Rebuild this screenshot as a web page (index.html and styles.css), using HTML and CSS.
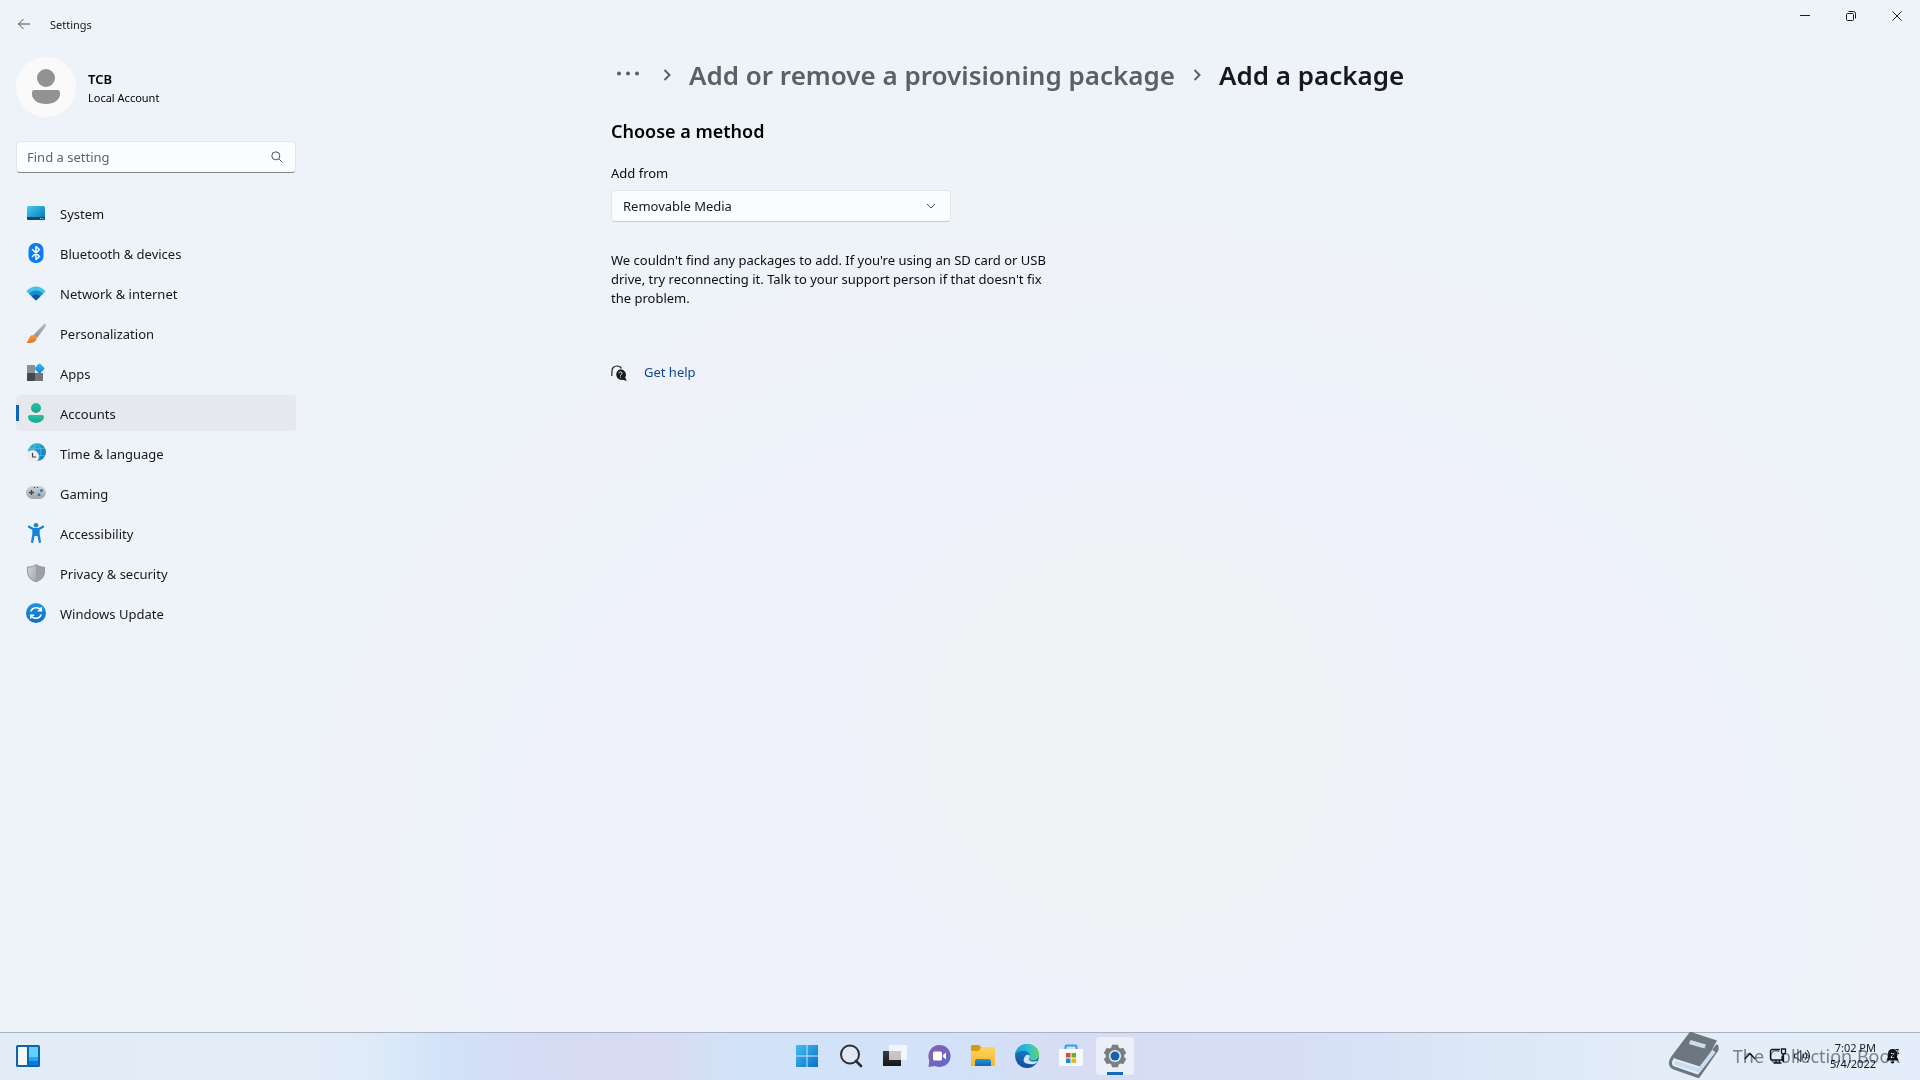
FILE: index.html
```html
<!DOCTYPE html>
<html lang="en">
<head>
<meta charset="utf-8">
<title>Settings</title>
<link rel="stylesheet" href="styles.css">
</head>
<body>
<svg class="defs" aria-hidden="true">
  <defs>
    <linearGradient id="g-sys" x1="0" y1="0" x2="1" y2="1"><stop offset="0" stop-color="#3fd0e8"/><stop offset="1" stop-color="#0a6fb8"/></linearGradient>
    <linearGradient id="g-brush" x1="0" y1="1" x2="1" y2="0"><stop offset="0" stop-color="#8a8d91"/><stop offset="1" stop-color="#b8bbbf"/></linearGradient>
    <linearGradient id="g-tip" x1="0" y1="0" x2="0" y2="1"><stop offset="0" stop-color="#f6a04a"/><stop offset="1" stop-color="#e0741a"/></linearGradient>
    <linearGradient id="g-dia" x1="0" y1="0" x2="1" y2="1"><stop offset="0" stop-color="#3cb6ea"/><stop offset="1" stop-color="#1585cf"/></linearGradient>
    <linearGradient id="g-acc" x1="0" y1="0" x2="0" y2="1"><stop offset="0" stop-color="#2cc2a4"/><stop offset="1" stop-color="#17a58c"/></linearGradient>
    <linearGradient id="g-globe" x1="0" y1="0" x2="1" y2="1"><stop offset="0" stop-color="#2fc0d6"/><stop offset="1" stop-color="#0c6fc6"/></linearGradient>
    <linearGradient id="g-pad" x1="0" y1="0" x2="0" y2="1"><stop offset="0" stop-color="#cfd3d8"/><stop offset="1" stop-color="#a2a6ad"/></linearGradient>
    <linearGradient id="g-shield" x1="0" y1="0" x2="1" y2="1"><stop offset="0" stop-color="#d2d5d8"/><stop offset="1" stop-color="#a4a7ab"/></linearGradient>
    <linearGradient id="g-upd" x1="0" y1="0" x2="0" y2="1"><stop offset="0" stop-color="#1a9ae0"/><stop offset="1" stop-color="#0f6cc4"/></linearGradient>
    <linearGradient id="g-win" x1="0" y1="0" x2="1" y2="1"><stop offset="0" stop-color="#3fc0f0"/><stop offset="1" stop-color="#0a6fc8"/></linearGradient>
    <linearGradient id="g-chat" x1="0" y1="0" x2="1" y2="1"><stop offset="0" stop-color="#8e62a8"/><stop offset="1" stop-color="#5a68d0"/></linearGradient>
    <linearGradient id="g-fold" x1="0" y1="0" x2="0" y2="1"><stop offset="0" stop-color="#fdd55c"/><stop offset="1" stop-color="#f4b82c"/></linearGradient>
    <linearGradient id="g-foldb" x1="0" y1="0" x2="0" y2="1"><stop offset="0" stop-color="#2a94d8"/><stop offset="1" stop-color="#1466b4"/></linearGradient>
    <linearGradient id="g-edge" x1="0" y1="0" x2="1" y2="0"><stop offset="0" stop-color="#1f9fe0"/><stop offset=".55" stop-color="#2fc0d0"/><stop offset="1" stop-color="#62d564"/></linearGradient>
    <linearGradient id="g-edge2" x1="0" y1="0" x2="0" y2="1"><stop offset="0" stop-color="#1a86d6"/><stop offset="1" stop-color="#0e4f9c"/></linearGradient>
    <linearGradient id="g-tv" x1="0" y1="0" x2="0" y2="1"><stop offset="0" stop-color="#3c3c3e"/><stop offset="1" stop-color="#161618"/></linearGradient>
  </defs>
</svg>

<div class="window">
  <header class="titlebar">
    <button class="back" aria-label="Back">
      <svg width="14" height="12" viewBox="0 0 14 12"><path d="M6.500 1 1.500 6l5 5M1.500 6H13" class="line-soft"/></svg>
    </button>
    <span class="app-name">Settings</span>
    <div class="caption">
      <button aria-label="Minimize"><svg width="12" height="12" viewBox="0 0 12 12"><path d="M1 5.500h10" class="line"/></svg></button>
      <button aria-label="Restore"><svg width="12" height="12" viewBox="0 0 12 12"><rect x="1.500" y="3.500" width="7" height="7" rx="1" class="line"/><path d="M3.500 1.500h5a2 2 0 0 1 2 2v5" class="line"/></svg></button>
      <button aria-label="Close"><svg width="12" height="12" viewBox="0 0 12 12"><path d="m1.500 1.500 9 9m0-9-9 9" class="line"/></svg></button>
    </div>
  </header>

  <aside class="sidebar">
    <div class="account">
      <svg class="avatar" width="60" height="60" viewBox="0 0 60 60"><circle cx="30" cy="30" r="30" fill="#fafafa"/><circle cx="30" cy="21" r="9" fill="#929292"/><path d="M18.500 33h23a2.500 2.500 0 0 1 2.500 2.500v1.500c0 6-6 10-14 10s-14-4-14-10v-1.500a2.500 2.500 0 0 1 2.500-2.500z" fill="#929292"/></svg>
      <div class="account-text">
        <strong>TCB</strong>
        <span>Local Account</span>
      </div>
    </div>

    <label class="search">
      <input type="text" placeholder="Find a setting" aria-label="Find a setting">
      <svg width="12" height="12" viewBox="0 0 12 12"><circle cx="4.800" cy="4.800" r="4" class="line-soft"/><path d="m7.800 7.800 3.600 3.600" class="line-soft"/></svg>
    </label>

    <nav class="nav">
      <a href="#"><svg width="20" height="20" viewBox="0 0 20 20"><rect x="1" y="2" width="18" height="14" rx="1.500" fill="url(#g-sys)"/><path d="M1 13h18v1.500a1.500 1.500 0 0 1-1.500 1.500h-15A1.500 1.500 0 0 1 1 14.500z" fill="#0b4a73"/><path d="M14 14h1.300v1H14zM16.300 14h1.300v1h-1.300z" fill="#9cd8ee"/></svg>System</a>
      <a href="#"><svg width="20" height="20" viewBox="0 0 20 20"><rect x="2.500" y="-1" width="15" height="20" rx="7" fill="#0a7cf0"/><path d="m6.500 5.500 7 7L10 15.500v-13l3.500 3-7 7" fill="none" stroke="#fff" stroke-width="1.500" stroke-linejoin="round" stroke-linecap="round"/></svg>Bluetooth &amp; devices</a>
      <a href="#"><svg width="20" height="20" viewBox="0 0 20 20"><path d="M.3 7.200C6 .8 14 .8 19.700 7.200L10 16.500z" fill="#41c4ea"/><path d="M3 9.700c4-4.300 10-4.300 14 0l-7 6.800z" fill="#1a8bcd"/><path d="M5.800 12.400c2.400-2.500 6-2.500 8.400 0L10 16.500z" fill="#0d579e"/></svg>Network &amp; internet</a>
      <a href="#"><svg width="20" height="20" viewBox="0 0 20 20"><path d="M19.500 0c1 .8.300 2.300-.4 3.300l-8 10.700-3.600-3L16.800 1.200C17.600.3 18.700-.5 19.500 0z" fill="url(#g-brush)"/><path d="M7 11c2.300.2 4 1.700 3.600 3.800C10 18 6.500 19.200.5 19c2.500-2.300 2-7.800 6.500-8z" fill="url(#g-tip)"/></svg>Personalization</a>
      <a href="#"><svg width="20" height="20" viewBox="0 0 20 20"><path d="M1 1h8v8H1z" fill="#8d9095"/><path d="M1 9h8v8H1z" fill="#45484c"/><path d="M9 9h8v8H9z" fill="#72757a"/><rect x="9.700" y=".7" width="7.600" height="7.600" rx="1" transform="rotate(45 13.500 4.500)" fill="url(#g-dia)"/></svg>Apps</a>
      <a href="#" class="current" aria-current="page"><svg width="20" height="20" viewBox="0 0 20 20"><circle cx="10" cy="4" r="5" fill="url(#g-acc)"/><path d="M3.800 11h12.400c1 0 1.800.8 1.800 1.800 0 3.400-3.500 6-8 6s-8-2.600-8-6c0-1 .8-1.800 1.800-1.800z" fill="url(#g-acc)"/></svg>Accounts</a>
      <a href="#"><svg width="20" height="20" viewBox="0 0 20 20"><circle cx="11" cy="8" r="9" fill="url(#g-globe)"/><path d="M11-1c-5 5-5 13 0 18m0-18c5 5 5 13 0 18M3 4.500h16M3 11.500h16" fill="none" stroke="#9de4f2" stroke-opacity=".4" stroke-width=".8"/><circle cx="6.500" cy="12.500" r="6.500" fill="#eceef0"/><path d="M6.500 9v4h3.500" fill="none" stroke="#3e4146" stroke-width="1.200"/></svg>Time &amp; language</a>
      <a href="#"><svg width="20" height="20" viewBox="0 0 20 20"><rect x="0" y="2" width="20" height="13" rx="6.500" fill="url(#g-pad)"/><path d="M5.500 6v5M3 8.500h5" stroke="#3e4146" stroke-width="1.300"/><circle cx="15.500" cy="6.500" r="1.500" fill="#2d78b8"/><circle cx="13" cy="10.700" r="1.500" fill="#2d78b8"/><path d="M8 3.500h1.200M11 3.500h1.200" stroke="#3e4146"/></svg>Gaming</a>
      <a href="#"><svg width="20" height="20" viewBox="0 0 20 20"><circle cx="10" cy="1.200" r="2.300" fill="#1486d4"/><path d="m3 2.800 4.500 2.400h5L17 2.800M7.500 5.500v5L6.200 17.800M12.500 5.500v5l1.300 7.300" fill="none" stroke="#1486d4" stroke-width="2.400" stroke-linecap="round" stroke-linejoin="round"/><path d="M7.500 5h5v7h-5z" fill="#1486d4"/></svg>Accessibility</a>
      <a href="#"><svg width="20" height="20" viewBox="0 0 20 20"><path d="M10 0c2.500 1.800 5.500 2.700 9 2.800V8c0 4.800-3.500 8.300-9 10.200C4.500 16.300 1 12.800 1 8V2.800C4.500 2.700 7.500 1.800 10 0z" fill="#97999e"/><path d="M10 1.200c2.300 1.500 5 2.400 8 2.600V8c0 4.200-3 7.300-8 9.100z" fill="#9c9fa3"/><path d="M10 1.200C7.700 2.700 5 3.600 2 3.800V8c0 4.200 3 7.300 8 9.100z" fill="url(#g-shield)"/></svg>Privacy &amp; security</a>
      <a href="#"><svg width="20" height="20" viewBox="0 0 20 20"><circle cx="10" cy="9" r="10" fill="url(#g-upd)"/><path d="M4.800 7.500A5.600 5.600 0 0 1 15 6.500M15.200 10.500A5.600 5.600 0 0 1 5 11.500M15.300 3.300v3.500h-3.500M4.700 14.700v-3.500h3.500" fill="none" stroke="#fff" stroke-width="1.500"/></svg>Windows Update</a>
    </nav>
  </aside>

  <main class="main">
    <div class="content">
      <nav class="crumbs" aria-label="Breadcrumb">
        <button class="more" aria-label="More"><svg width="24" height="6" viewBox="0 0 24 6"><circle cx="3" cy="1.500" r="2"/><circle cx="12" cy="1.500" r="2"/><circle cx="21" cy="1.500" r="2"/></svg></button>
        <svg class="sep" width="8" height="12" viewBox="0 0 8 12"><path d="m1.500 1 5 5-5 5"/></svg>
        <a href="#">Add or remove a provisioning package</a>
        <svg class="sep" width="8" height="12" viewBox="0 0 8 12"><path d="m1.500 1 5 5-5 5"/></svg>
        <h1>Add a package</h1>
      </nav>

      <h2>Choose a method</h2>
      <label class="field-label" for="source">Add from</label>
      <div class="picker">
        <select id="source"><option>Removable Media</option></select>
        <svg width="10" height="6" viewBox="0 0 10 6"><path d="m1 1 4 4 4-4" class="line-soft"/></svg>
      </div>
      <p class="message">We couldn't find any packages to add. If you're using an SD card or USB drive, try reconnecting it. Talk to your support person if that doesn't fix the problem.</p>
      <div class="help">
        <svg width="16" height="16" viewBox="0 0 16 16"><path d="M1 11c-.5-1 .2-3.500 0-4.500C.6 3.200 3 1 6 1c2 0 3.700 1 4.300 2.500M1 11l-.5-.8" fill="none" stroke="#1b1b1b" stroke-width="1.200"/><path d="M9.500 4.200a5.400 5.400 0 0 1 4.700 8.200L15.800 16l-4-1.200A5.400 5.400 0 1 1 9.500 4.200z" fill="#1b1b1b"/><path d="M8 8.300c0-2 3-2 3 0 0 1.100-1.500 1.200-1.500 2.400M9.500 11.700v1" fill="none" stroke="#fff"/></svg>
        <a href="#">Get help</a>
      </div>
    </div>
  </main>
</div>

<footer class="taskbar">
  <div class="task-left">
    <button aria-label="Widgets"><svg width="24" height="22" viewBox="0 0 24 22"><rect width="24" height="22" rx="1.500" fill="#0f62ac"/><path d="M2 2h9v18H2z" fill="#f4f8fc"/><path d="M13 2h9v10h-9z" fill="#62d2f8"/><path d="M13 12h9v4h-9z" fill="#22a6f2"/><path d="M13 16h9v4h-9z" fill="#0a7ae0"/></svg></button>
  </div>
  <div class="task-apps">
    <button aria-label="Start"><svg width="24" height="24" viewBox="0 0 24 24"><path d="M1 1h10.500v10.500H1zM12.500 1H23v10.500H12.500zM1 12.500h10.500V23H1zM12.500 12.500H23V23H12.500z" fill="url(#g-win)"/></svg></button>
    <button aria-label="Search"><svg width="24" height="24" viewBox="0 0 24 24"><circle cx="11" cy="10.500" r="9" fill="#e9edf8" fill-opacity=".6" stroke="#2c2e33" stroke-width="2"/><path d="m17 17 5 5" stroke="#2c2e33" stroke-width="2.600" stroke-linecap="round"/></svg></button>
    <button aria-label="Task view"><svg width="24" height="24" viewBox="0 0 24 24"><path d="M0 7h18v15H0z" fill="url(#g-tv)"/><path d="M6 1h18v15H6z" fill="#fff" fill-opacity=".72"/></svg></button>
    <button aria-label="Chat"><svg width="24" height="24" viewBox="0 0 24 24"><path d="M12.500 1A11 11 0 1 1 8 22l-6.500 1 .8-6.500A11 11 0 0 1 12.500 1z" fill="url(#g-chat)"/><rect x="6" y="7.500" width="9" height="9" rx="1.500" fill="#fff"/><path d="m16 11 3-2.500v7L16 13z" fill="#fff"/></svg></button>
    <button aria-label="File Explorer"><svg width="24" height="24" viewBox="0 0 24 24"><path d="M0 2.500C0 1.700.6 1 1.400 1H8l2.500 3-2 3H0z" fill="#d9980f"/><path d="M0 7h7.500l3-4h12.100c.8 0 1.400.6 1.400 1.400V22H0z" fill="url(#g-fold)"/><path d="M4 22v-4.500A2.500 2.500 0 0 1 6.500 15h11a2.500 2.500 0 0 1 2.500 2.500V22z" fill="url(#g-foldb)"/></svg></button>
    <button aria-label="Edge"><svg width="24" height="24" viewBox="0 0 24 24"><circle cx="12" cy="12" r="12" fill="url(#g-edge2)"/><path d="M0 11C1 4 6 0 12 0c7 0 12 5 12 10.500 0 4-3 6-6.300 6-2.600 0-4-1-4-1.900 0-.7 1.100-1.300 1.100-3 0-2.300-2.400-4.800-6-4.800C4.500 6.800 1 8.300 0 11z" fill="url(#g-edge)"/><path d="M8.600 16.500c0-3 1.700-5.200 4-6 1.300.3 2.200 1 2.200 2.100 0 1-1.100 1.600-1.100 2.500 0 1.400 2 2.400 4.300 2.400 1.800 0 3.300-.5 4-.8.700 0 .7.600.5.900-1 1.500-2.500 2.600-4.500 2.600-5 0-9.400-.7-9.400-3.700z" fill="#d3e2f8"/></svg></button>
    <button aria-label="Microsoft Store"><svg width="24" height="24" viewBox="0 0 24 24"><path d="M6.500 6V3A1.500 1.500 0 0 1 8 1.500h8A1.500 1.500 0 0 1 17.500 3v3" fill="none" stroke="#2ea0e4" stroke-width="2"/><path d="M0 5h24v15a2 2 0 0 1-2 2H2a2 2 0 0 1-2-2z" fill="#f8f9fb"/><path d="M7 9h4.500v4.500H7z" fill="#e04a24"/><path d="M12.500 9H17v4.500h-4.500z" fill="#6eae24"/><path d="M7 14.500h4.500V19H7z" fill="#1c8ada"/><path d="M12.500 14.500H17V19h-4.500z" fill="#f2b41c"/></svg></button>
    <button class="active" aria-label="Settings"><svg width="24" height="24" viewBox="0 0 24 24"><g fill="#7b7e83"><circle cx="12" cy="12" r="9.300"/><path d="M9 .8h6l1 4.200H8zM9 23.200h6l1-4.200H8z"/><path d="M9 .8h6l1 4.200H8zM9 23.200h6l1-4.200H8z" transform="rotate(60 12 12)"/><path d="M9 .8h6l1 4.200H8zM9 23.200h6l1-4.200H8z" transform="rotate(120 12 12)"/></g><circle cx="12" cy="12" r="6" fill="#eef2f8"/><circle cx="12" cy="12" r="4.500" fill="#1561ae"/></svg></button>
  </div>
  <div class="tray">
    <button aria-label="Show hidden icons"><svg width="12" height="8" viewBox="0 0 12 8"><path d="m.8 7 5.200-5.500L11.200 7" class="line-dark"/></svg></button>
    <button class="net" aria-label="Network"><svg width="16" height="16" viewBox="0 0 16 16"><path d="M10 1.500H2A1.500 1.500 0 0 0 .5 3v7.500A1.500 1.500 0 0 0 2 12h10.500V8M6 12v3M9.500 12v3M3.500 15h8M11.500 1v3a2 2 0 0 0 4 0V1zM13.500 6v8" class="line-dark"/></svg></button>
    <button aria-label="Volume"><svg width="16" height="14" viewBox="0 0 16 14"><path d="M.6 5v4h2.600l3.600 3.500v-11L3.200 5zM8.800 4.800c1.200 1.300 1.200 3.100 0 4.400M11 3c2.200 2.300 2.200 5.700 0 8M13 1c3.300 3.500 3.300 8.500 0 12" class="line-dark thin"/></svg></button>
    <div class="clock"><span>7:02 PM</span><span>5/4/2022</span></div>
    <button aria-label="Notifications"><svg width="14" height="16" viewBox="0 0 14 16"><path d="M6.500 1C3.500 1 2 3 2 5.500V9L.3 12.500h12.400L11 9V5.500C11 3 9.500 1 6.500 1zM4.500 13.500h4a2 2 0 0 1-4 0z" fill="#15181c"/><path d="M5 5.500h3L5 9.500h3.200" fill="none" stroke="#e4edf7"/><path d="M9.500 1.500h3L10 5h3" fill="none" stroke="#15181c"/></svg></button>
  </div>
  <div class="watermark">
    <svg width="50" height="48" viewBox="0 0 50 48"><path d="M22 0 48 8.500 34 34 5 25z" fill="#7b7f83"/><path d="M21.500 8 37 12.500l-1.500 4L20 12z" fill="#e3edf7"/><path d="M22 1 3.500 25.500c-3.500 5-2.500 9 1.500 10.500l24.500 8.500L48 18v-4L33 33.500 6 25" fill="none" stroke="#7b7f83" stroke-width="3" stroke-linejoin="round"/><path d="M5.500 30.500 30 38.500 45 19" fill="none" stroke="#e3edf7" stroke-width="4"/></svg>
    <span>The Collection Book</span>
  </div>
</footer>
</body>
</html>
```
FILE: styles.css
```css
* {
  box-sizing: border-box;
}

body {
  margin: 0;
  min-height: 100vh;
  display: flex;
  flex-direction: column;
  font: 13px/19px "Noto Sans", "Open Sans", sans-serif;
  color: #16181b;
  background:
    radial-gradient(ellipse 16% 26% at 59% 68%, #f1f2f6 0%, #f1f2f6 60%, #f1f2f600 100%),
    radial-gradient(ellipse 62% 90% at 59% 84%, #eff2fb 0%, #eff2fb 50%, #eef3f7 72%, #eef3f7 80%, #eef3f700 100%),
    #eef3fa;
}

button {
  display: flex;
  align-items: center;
  justify-content: center;
  padding: 0;
  border: 0;
  background: none;
  font: inherit;
  color: inherit;
}

a {
  color: inherit;
  text-decoration: none;
}

svg {
  flex: none;
  overflow: visible;
}

.defs {
  position: absolute;
  width: 0;
  height: 0;
}

.line,
.line-soft,
.line-dark {
  fill: none;
  stroke: #1b1d20;
}

.line-soft {
  stroke: #4c5055;
}

.line-dark {
  stroke: #15181c;
  stroke-width: 1.3;
}

.thin {
  stroke-width: 1;
}

.window {
  flex: 1;
  display: grid;
  grid-template: 48px 1fr / 312px 1fr;
}

.titlebar {
  grid-column: 1 / -1;
  display: flex;
  align-items: center;
}

.back {
  width: 34px;
  height: 36px;
  margin-left: 7px;
}

.app-name {
  margin-left: 9px;
  font-size: 11px;
}

.caption {
  display: flex;
  align-self: flex-start;
  margin-left: auto;
}

.caption button {
  width: 46px;
  height: 32px;
}

.sidebar {
  padding: 9px 16px 0;
}

.account {
  display: flex;
  align-items: center;
  gap: 12px;
  color: #000;
}

.account-text {
  display: flex;
  flex-direction: column;
  padding-top: 2px;
  font-size: 11px;
  line-height: 17px;
}

.account-text strong {
  font-size: 13px;
  font-weight: 600;
  line-height: 19px;
}

.search,
.picker {
  display: grid;
  align-items: center;
}

.search > *,
.picker > * {
  grid-area: 1 / 1;
}

.search svg,
.picker svg {
  justify-self: end;
  pointer-events: none;
}

.search {
  margin-top: 24px;
}

.search svg {
  margin-right: 13px;
}

.search input {
  width: 100%;
  height: 32px;
  padding: 0 36px 0 10px;
  border: 1px solid #e2e6ec;
  border-bottom-color: #85888c;
  border-radius: 4px;
  background: #fbfcfe;
  font: inherit;
}

.search input::placeholder {
  color: #62656a;
  opacity: 1;
}

.nav {
  display: grid;
  gap: 4px;
  margin-top: 22px;
}

.nav a {
  display: flex;
  align-items: center;
  gap: 14px;
  height: 36px;
  padding: 2px 0 0 10px;
  border-radius: 4px;
}

.nav .current {
  background: linear-gradient(#0f62b4, #0f62b4) 0 50% / 3px 16px no-repeat #e5e9ee;
}

.content {
  max-width: 1010px;
  margin: 0 auto;
  padding-top: 6px;
  color: #0c0d0f;
}

.crumbs {
  display: flex;
  align-items: center;
  gap: 18px;
  height: 42px;
  font-size: 26px;
  font-weight: 600;
  line-height: 40px;
  color: #5c6064;
}

.more {
  width: 34px;
  height: 32px;
  fill: #5c6064;
}

.sep {
  fill: none;
  stroke: #5c6064;
  stroke-width: 2;
}

h1 {
  margin: 0;
  font: inherit;
  color: #16181b;
}

h2 {
  margin: 22px 0 0;
  font-size: 18px;
  font-weight: 600;
  line-height: 26px;
  color: #000;
}

.field-label {
  display: block;
  margin-top: 20px;
}

.picker {
  width: 340px;
  margin-top: 7px;
}

.picker select {
  appearance: none;
  width: 100%;
  height: 32px;
  padding: 0 36px 0 11px;
  border: 1px solid #e2e6ec;
  border-bottom-color: #c6cad0;
  border-radius: 4px;
  background: #fbfcfe;
  font: inherit;
  color: #16181b;
}

.picker svg {
  margin-right: 15px;
}

.message {
  max-width: 448px;
  margin: 29px 0 0;
}

.help {
  display: flex;
  align-items: center;
  gap: 17px;
  margin-top: 55px;
}

.help a {
  color: #0b4392;
}

.taskbar {
  position: relative;
  display: grid;
  grid-template-columns: 1fr auto 1fr;
  align-items: center;
  height: 48px;
  padding-bottom: 1px;
  border-top: 1px solid #aab2bf;
  background: linear-gradient(90deg, #e1ecf6 0%, #e2edf8 16%, #e0ebf8 19%, #d2e3f9 23%, #d5dbf4 28%, #d8dbf1 34%, #d2e2f8 38%, #d2e2f8 49%, #d7dcf3 58%, #d6dff6 68%, #dde8f7 78%, #e2edf8 86%, #e3eefa 100%);
}

.task-left {
  padding-left: 16px;
}

.task-apps {
  display: flex;
  gap: 6px;
  padding-left: 2px;
}

.task-apps button {
  width: 38px;
  height: 38px;
  border-radius: 4px;
}

.task-apps .active {
  background: linear-gradient(#0f6cbd, #0f6cbd) 50% 100% / 16px 3px no-repeat #ebeff8;
}

.tray {
  display: flex;
  align-items: center;
  justify-content: flex-end;
  gap: 10px;
  padding-right: 20px;
}

.tray .net {
  margin: 0 -2px 0 4px;
}

.clock {
  display: flex;
  flex-direction: column;
  width: 56px;
  font-size: 11px;
  line-height: 16px;
  text-align: right;
}

/* Channel mark laid over the system tray. */
.watermark {
  position: absolute;
  right: 20px;
  bottom: 0;
  display: flex;
  align-items: center;
  gap: 14px;
  font-size: 18px;
  line-height: 24px;
  color: #85898e;
  mix-blend-mode: multiply;
  pointer-events: none;
}
```
